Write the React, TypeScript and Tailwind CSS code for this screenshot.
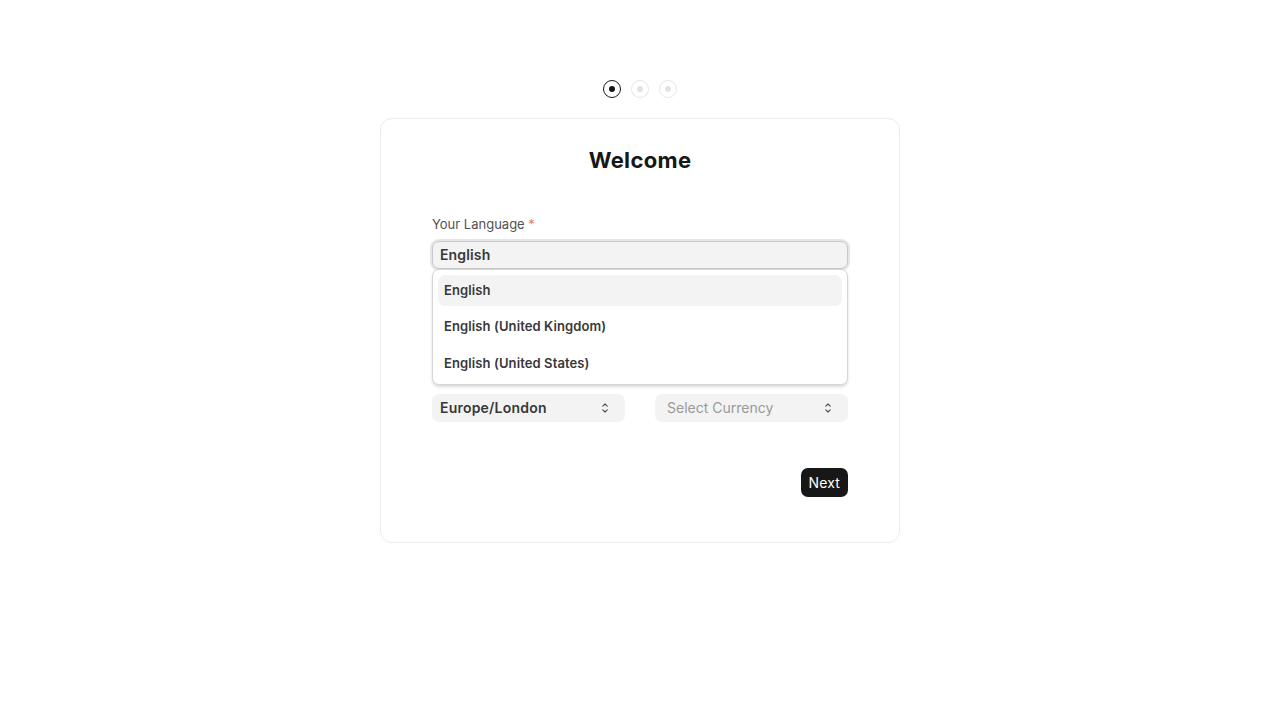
import React from "react";

function Chevrons() {
  return (
    <svg width="10" height="14" viewBox="0 0 10 14" fill="none" stroke="#525252" strokeWidth="1.2" strokeLinecap="round" strokeLinejoin="round">
      <path d="M2.8 5.2 L5 3 L7.2 5.2" />
      <path d="M2.8 8.8 L5 11 L7.2 8.8" />
    </svg>
  );
}

function Dot({ active }: { active?: boolean }) {
  return (
    <div
      className={
        "flex h-[18px] w-[18px] items-center justify-center rounded-full border " +
        (active ? "border-[#171717]" : "border-[#e6e6e6]")
      }
    >
      <div className={"h-[6px] w-[6px] rounded-full " + (active ? "bg-[#171717]" : "bg-[#e2e2e2]")} />
    </div>
  );
}

export default function App() {
  const items = ["English", "English (United Kingdom)", "English (United States)"];
  return (
    <div
      className="flex min-h-[720px] w-full flex-col items-center bg-white pt-[80px]"
      style={{ fontFamily: "Inter, 'Noto Sans', sans-serif" }}
    >
      <div className="flex items-center gap-[10px]">
        <Dot active />
        <Dot />
        <Dot />
      </div>
      <div className="mt-[20px] flex w-[520px] flex-col rounded-[12px] border border-[#ebebeb] bg-white px-[51px] pb-[45px] pt-[27px]">
        <h1 className="text-center text-[22px] font-bold leading-[28px] tracking-[0.015em] text-[#171717]">Welcome</h1>
        <div className="mt-[42px] text-[13px] leading-[16px] text-[#525252]">
          Your Language <span className="text-[#f07a6b]">*</span>
        </div>
        <div className="relative mt-[9px]">
          <div className="flex h-[28px] items-center rounded-[7px] border border-[#c8c8c8] bg-[#f3f3f3] px-[7px] pb-[1px] text-[14px] font-semibold tracking-[0.01em] text-[#383838] ring-2 ring-[#e6e6e6]">
            English
          </div>
          <div className="absolute left-0 right-0 top-[28px] z-10 flex flex-col gap-[5.5px] rounded-[7px] border border-[#d6d6d6] bg-white p-[5px] shadow-[0_2px_3px_rgba(0,0,0,0.14)]">
            {items.map((it, i) => (
              <div
                key={it}
                className={
                  "flex h-[31px] items-center rounded-[7px] px-[6px] text-[13px] font-semibold tracking-[0.008em] text-[#383838] " +
                  (i === 0 ? "bg-[#f3f3f3]" : "")
                }
              >
                {it}
              </div>
            ))}
          </div>
        </div>
        <div className="mt-[125px] grid grid-cols-2 gap-[30px]">
          <div className="flex h-[28px] items-center justify-between rounded-[7px] bg-[#f3f3f3] pb-[1px] pl-[8px] pr-[15px] text-[14px] font-semibold tracking-[0.015em] text-[#383838]">
            <span>Europe/London</span>
            <Chevrons />
          </div>
          <div className="flex h-[28px] items-center justify-between rounded-[7px] bg-[#f3f3f3] pb-[1px] pl-[12px] pr-[15px] text-[14px] text-[#9a9a9a]">
            <span>Select Currency</span>
            <Chevrons />
          </div>
        </div>
        <div className="mt-[46px] flex justify-end">
          <button className="flex h-[29px] items-center rounded-[7px] bg-[#171717] px-[8px] text-[14px] tracking-[0.01em] text-white">
            Next
          </button>
        </div>
      </div>
    </div>
  );
}
